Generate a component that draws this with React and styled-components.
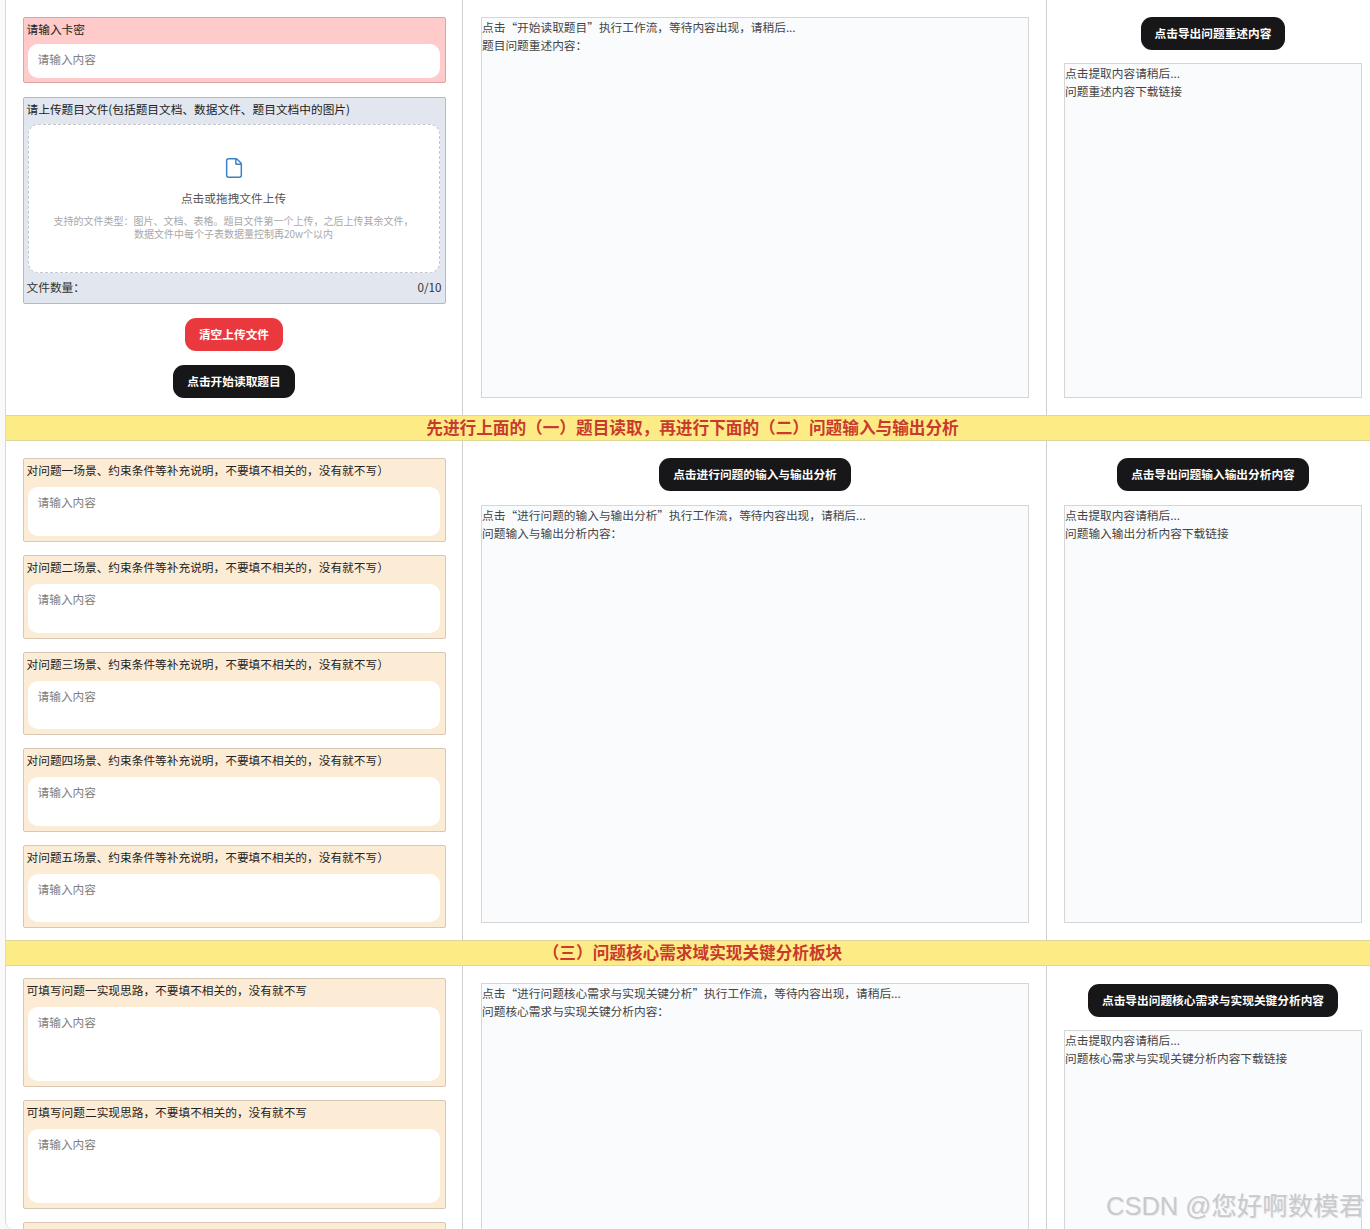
import styled, { createGlobalStyle } from "styled-components";
import { File } from "lucide-react";

const GlobalStyle = createGlobalStyle`
  html, body {
    margin: 0;
    height: 1229px;
    overflow: hidden;
    background: #f9f9f9;
  }
  body {
    font-family: "Noto Sans CJK SC", "Liberation Sans", sans-serif;
    font-size: 11.7px;
    color: #333;
  }
`;

const Page = styled.div`
  position: relative;
  height: 1229px;
  overflow: hidden;
  margin-left: 5px;
  border-left: 1px solid #d9d9d9;
  border-bottom-left-radius: 8px;
  background: #fff;
`;

const Row = styled.div`
  display: grid;
  grid-template-columns: 457px 584px 1fr;
  height: ${(p) => p.$height}px;
  overflow: hidden;
`;

const Banner = styled.div`
  height: 26px;
  box-sizing: border-box;
  margin-left: -1px;
  border-top: 1px solid #dcd79a;
  border-bottom: 1px solid #dcd79a;
  background: #fdec85;
  color: #c93a2e;
  font-size: 16.65px;
  font-weight: 700;
  line-height: 23px;
  text-align: center;
  padding-left: 10px;
`;

const Cell = styled.div`
  box-sizing: border-box;
  border-right: 1px solid #cfcfcf;
  padding: ${(p) => p.$top ?? 17}px 17px 0 ${(p) => p.$left ?? 17}px;
  display: flex;
  flex-direction: column;
  align-items: center;
  gap: ${(p) => p.$gap ?? 13}px;
  &:last-child {
    border-right: 0;
    padding-right: 8px;
  }
`;

const Card = styled.div`
  box-sizing: border-box;
  width: 423px;
  flex: none;
  height: ${(p) => p.$height}px;
  display: flex;
  flex-direction: column;
  padding: 0 5px ${(p) => (p.$tall ? 5 : 4)}px 4px;
  border: 1px solid ${(p) => p.$line};
  border-radius: 2px;
  background: ${(p) => p.$bg};
`;

const CardLabel = styled.div`
  flex: none;
  height: ${(p) => (p.$tall ? 28 : 26)}px;
  margin-left: -1px;
  line-height: 21px;
  color: #222;
  white-space: nowrap;
`;

const Field = styled.div`
  flex: 1;
  min-height: 0;
  border-radius: 10px;
  background: #fff;
  padding: 0 10px;
  line-height: 30px;
  color: #808080;
`;

const DropZone = styled.div`
  flex: 1;
  min-height: 0;
  box-sizing: border-box;
  border: 1px dashed #c3c8d0;
  border-radius: 10px;
  background: #fff;
  display: flex;
  flex-direction: column;
  align-items: center;
  padding-top: 32px;
  color: #666;
  svg {
    color: #3b80c2;
  }
`;

const DropTitle = styled.div`
  margin-top: 10px;
  line-height: 18px;
  color: #555;
`;

const DropHint = styled.div`
  margin-top: 7px;
  font-size: 10px;
  line-height: 13px;
  color: #a8a8a8;
  text-align: center;
`;

const CountRow = styled.div`
  flex: none;
  height: 26px;
  margin: 0 -2px 0 -1px;
  display: flex;
  justify-content: space-between;
  align-items: center;
  color: #333;
`;

const Button = styled.button`
  flex: none;
  height: 33px;
  padding: 0 14px 2px;
  border: 0;
  border-radius: 11px;
  background: ${(p) => (p.$danger ? "#e9393f" : "#17171a")};
  color: #fff;
  font: inherit;
  font-weight: 700;
  white-space: nowrap;
`;

const OutputBox = styled.div`
  box-sizing: border-box;
  align-self: stretch;
  flex: none;
  height: ${(p) => p.$height}px;
  border: 1px solid #d6d6d6;
  background: #fafbfd;
  color: #444;
  line-height: 18.3px;
`;

const Watermark = styled.div`
  position: absolute;
  left: 1100px;
  top: 1188px;
  font-family: "Liberation Sans", "Noto Sans CJK SC", sans-serif;
  font-size: 25.5px;
  line-height: 36px;
  color: #c8cacd;
  white-space: nowrap;
  text-shadow: 1px 1px 1px #e8e8e8;
`;

const TASK_CARD = { $bg: "#fdecd5", $line: "#d5c8b4", $tall: true };

const SCENE_LABELS = ["一", "二", "三", "四", "五"];
const SCENE_HEIGHTS = [84, 84, 83, 84, 83];
const IDEA_LABELS = ["一", "二", "三"];

const Lines = ({ lines }) => lines.map((line) => <div key={line}>{line}</div>);

export default function App() {
  return (
    <Page>
      <GlobalStyle />

      <Row $height={415}>
        <Cell $gap={14}>
          <Card $height={66} $bg="#fecaca" $line="#dba5a5">
            <CardLabel>请输入卡密</CardLabel>
            <Field>请输入内容</Field>
          </Card>
          <Card $height={207} $bg="#e1e6ef" $line="#b4bac4">
            <CardLabel>请上传题目文件(包括题目文档、数据文件、题目文档中的图片)</CardLabel>
            <DropZone>
              <File size={22} strokeWidth={1.6} />
              <DropTitle>点击或拖拽文件上传</DropTitle>
              <DropHint>
                支持的文件类型：图片、文档、表格。题目文件第一个上传，之后上传其余文件，
                <br />
                数据文件中每个子表数据量控制再20w个以内
              </DropHint>
            </DropZone>
            <CountRow>
              <span>文件数量：</span>
              <span>0/10</span>
            </CountRow>
          </Card>
          <Button $danger>清空上传文件</Button>
          <Button>点击开始读取题目</Button>
        </Cell>
        <Cell $left={18}>
          <OutputBox $height={381}>
            <Lines lines={["点击“开始读取题目”执行工作流，等待内容出现，请稍后...", "题目问题重述内容："]} />
          </OutputBox>
        </Cell>
        <Cell>
          <Button>点击导出问题重述内容</Button>
          <OutputBox $height={335}>
            <Lines lines={["点击提取内容请稍后...", "问题重述内容下载链接"]} />
          </OutputBox>
        </Cell>
      </Row>

      <Banner>先进行上面的（一）题目读取，再进行下面的（二）问题输入与输出分析</Banner>

      <Row $height={499}>
        <Cell>
          {SCENE_LABELS.map((n, i) => (
            <Card key={n} $height={SCENE_HEIGHTS[i]} {...TASK_CARD}>
              <CardLabel $tall>对问题{n}场景、约束条件等补充说明，不要填不相关的，没有就不写）</CardLabel>
              <Field>请输入内容</Field>
            </Card>
          ))}
        </Cell>
        <Cell $left={18} $gap={14}>
          <Button>点击进行问题的输入与输出分析</Button>
          <OutputBox $height={418}>
            <Lines lines={["点击“进行问题的输入与输出分析”执行工作流，等待内容出现，请稍后...", "问题输入与输出分析内容："]} />
          </OutputBox>
        </Cell>
        <Cell $gap={14}>
          <Button>点击导出问题输入输出分析内容</Button>
          <OutputBox $height={418}>
            <Lines lines={["点击提取内容请稍后...", "问题输入输出分析内容下载链接"]} />
          </OutputBox>
        </Cell>
      </Row>

      <Banner>（三）问题核心需求域实现关键分析板块</Banner>

      <Row $height={263}>
        <Cell $top={12}>
          {IDEA_LABELS.map((n) => (
            <Card key={n} $height={109} {...TASK_CARD}>
              <CardLabel $tall>可填写问题{n}实现思路，不要填不相关的，没有就不写</CardLabel>
              <Field>请输入内容</Field>
            </Card>
          ))}
        </Cell>
        <Cell $left={18}>
          <OutputBox $height={420}>
            <Lines lines={["点击“进行问题核心需求与实现关键分析”执行工作流，等待内容出现，请稍后...", "问题核心需求与实现关键分析内容："]} />
          </OutputBox>
        </Cell>
        <Cell $top={18}>
          <Button>点击导出问题核心需求与实现关键分析内容</Button>
          <OutputBox $height={400}>
            <Lines lines={["点击提取内容请稍后...", "问题核心需求与实现关键分析内容下载链接"]} />
          </OutputBox>
        </Cell>
      </Row>

      <Watermark>CSDN @您好啊数模君</Watermark>
    </Page>
  );
}
